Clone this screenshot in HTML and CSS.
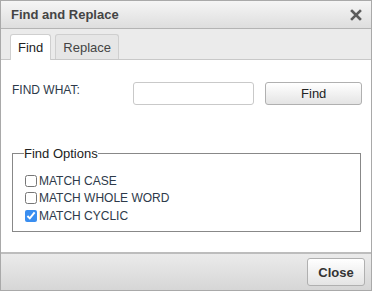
FILE: index.html
```html
<!DOCTYPE html>
<html lang="en">
<head>
  <meta charset="UTF-8" />
  <title>Find and Replace</title>
  <link rel="stylesheet" href="styles.css">
</head>
<body>
  <div class="dialog">
    <div class="titlebar">
      <span class="title">Find and Replace</span>
      <span class="close-x">
        <svg width="12" height="12" viewBox="0 0 12 12">
          <path d="M2 2 L10 10 M10 2 L2 10" stroke="#5c5c5c" stroke-width="2.6" stroke-linecap="square" fill="none"/>
        </svg>
      </span>
    </div>

    <div class="tabs">
      <div class="tab active">Find</div>
      <div class="tab">Replace</div>
    </div>

    <div class="content">
      <div class="find-row">
        <label class="find-label" for="find-what">FIND WHAT:</label>
        <input type="text" id="find-what" class="find-input">
        <button class="btn find-btn">Find</button>
      </div>

      <fieldset class="options">
        <legend>Find Options</legend>
        <label class="option"><input type="checkbox"> MATCH CASE</label>
        <label class="option"><input type="checkbox"> MATCH WHOLE WORD</label>
        <label class="option"><input type="checkbox" checked> MATCH CYCLIC</label>
      </fieldset>
    </div>

    <div class="footer">
      <button class="btn close-btn">Close</button>
    </div>
  </div>
</body>
</html>
```

FILE: styles.css
```css
html, body {
  margin: 0;
  padding: 0;
}
body {
  font-family: "Liberation Sans", Arial, sans-serif;
  font-size: 13px;
  color: #333;
}
.dialog {
  width: 372px;
  height: 291px;
  box-sizing: border-box;
  border: 1px solid #a9a9a9;
  display: flex;
  flex-direction: column;
  background: #fff;
}
.titlebar {
  height: 28px;
  box-sizing: border-box;
  border-bottom: 1px solid #b4b4b4;
  background: linear-gradient(#f5f5f5, #dedede);
  display: flex;
  align-items: center;
  justify-content: space-between;
  padding: 0 9px 0 10px;
}
.title {
  font-weight: bold;
  color: #444;
}
.close-x {
  display: flex;
}
.tabs {
  height: 31px;
  box-sizing: border-box;
  background: #ebebeb;
  border-bottom: 1px solid #c8c8c8;
  display: flex;
  align-items: flex-end;
  gap: 4px;
  padding-left: 9px;
}
.tab {
  height: 25px;
  box-sizing: border-box;
  border: 1px solid #cfcfcf;
  border-bottom: none;
  border-radius: 3px 3px 0 0;
  padding: 5px 7px 0;
  background: #e6e6e6;
  color: #444;
}
.tab.active {
  height: 26px;
  margin-bottom: -1px;
  background: #fff;
  color: #222;
}
.content {
  flex: 1;
  padding: 22px 9px 0 11px;
}
.find-row {
  display: flex;
  align-items: flex-start;
}
.find-label {
  width: 122px;
  font-size: 12px;
  color: #2d3a4a;
  padding-top: 1px;
}
.find-input {
  width: 121px;
  height: 23px;
  box-sizing: border-box;
  border: 1px solid #c9c9c9;
  border-radius: 3px;
  margin: 0;
  padding: 2px 4px;
}
.btn {
  font-family: "Liberation Sans", Arial, sans-serif;
  font-size: 13px;
  color: #222;
  border: 1px solid #b0b0b0;
  border-radius: 3px;
  background: linear-gradient(#ffffff, #e4e4e4);
  box-sizing: border-box;
  padding: 0;
  margin: 0;
}
.find-btn {
  width: 97px;
  height: 23px;
  margin-left: 11px;
}
.options {
  margin: 41px 0 0 0;
  width: 349px;
  box-sizing: border-box;
  border: 1px solid #888;
  padding: 11px 0 6px 11px;
}
.options legend {
  padding: 0;
  margin-left: 0;
  font-size: 13px;
  color: #222;
}
.option {
  display: flex;
  align-items: center;
  height: 17.5px;
  font-size: 12px;
  color: #2d3a4a;
}
.option input {
  margin: 0 2px 0 1px;
  width: 12px;
  height: 12px;
  accent-color: #3a8ef0;
}
.footer {
  height: 38px;
  box-sizing: border-box;
  border-top: 2px solid #bdbdbd;
  background: linear-gradient(#ebebeb, #d6d6d6);
  display: flex;
  align-items: center;
  justify-content: flex-end;
  padding-right: 6px;
}
.close-btn {
  width: 58px;
  height: 28px;
  font-weight: bold;
  color: #333;
}
```
